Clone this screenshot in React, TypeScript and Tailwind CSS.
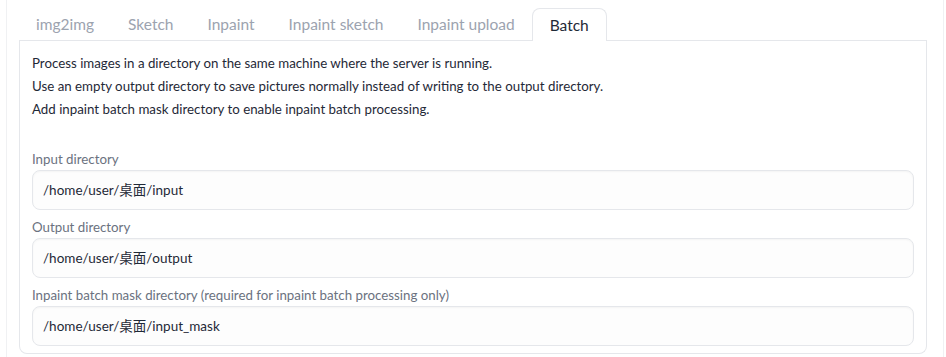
export default function App() {
  const tabs = ["img2img", "Sketch", "Inpaint", "Inpaint sketch", "Inpaint upload", "Batch"];
  const fields = [
    { label: "Input directory", value: "/home/user/桌面/input" },
    { label: "Output directory", value: "/home/user/桌面/output" },
    { label: "Inpaint batch mask directory (required for inpaint batch processing only)", value: "/home/user/桌面/input_mask" },
  ];
  return (
    <div
      className="w-[946px] h-[357px] bg-white overflow-hidden"
      style={{ fontFamily: "Lato, 'Noto Sans CJK SC', sans-serif" }}
    >
      <div className="ml-[6px] mr-[2px] h-full border-x border-[#f0f1f3] pl-[12px] pr-[16px] pt-[8px]">
        <div className="flex h-[33px] border-b border-[#e5e7eb]">
          {tabs.map((t) => (
            <div
              key={t}
              className={
                t === "Batch"
                  ? "px-[17px] pt-[2px] h-[33px] -mb-px flex items-center text-[15.5px] text-[#1f2937] bg-white border border-b-0 border-[#e5e7eb] rounded-t-[8px]"
                  : "px-[17px] pt-[2px] h-[32px] flex items-center text-[15.5px] text-[#9ca3af]"
              }
            >
              {t}
            </div>
          ))}
        </div>
        <div className="border border-t-0 border-[#e5e7eb] rounded-b-[8px] px-[12px] pt-[11px] pb-[7px]">
          <div className="text-[13.3px] leading-[23px] text-[#1f2937]">
            <p>Process images in a directory on the same machine where the server is running.</p>
            <p>Use an empty output directory to save pictures normally instead of writing to the output directory.</p>
            <p>Add inpaint batch mask directory to enable inpaint batch processing.</p>
          </div>
          <div className="mt-[28px] flex flex-col gap-[7px]">
            {fields.map((f) => (
              <div key={f.label} className="flex flex-col">
                <div className="text-[13.3px] leading-[20px] text-[#6b7280] mb-[1px]">{f.label}</div>
                <div className="h-[40px] rounded-[8px] border border-[#e5e7eb] bg-[#fdfdfd] shadow-[inset_0_1px_2px_rgba(0,0,0,0.04)] flex items-center px-[10px] text-[13.5px] text-[#1f2937]">
                  {f.value}
                </div>
              </div>
            ))}
          </div>
        </div>
      </div>
    </div>
  );
}
